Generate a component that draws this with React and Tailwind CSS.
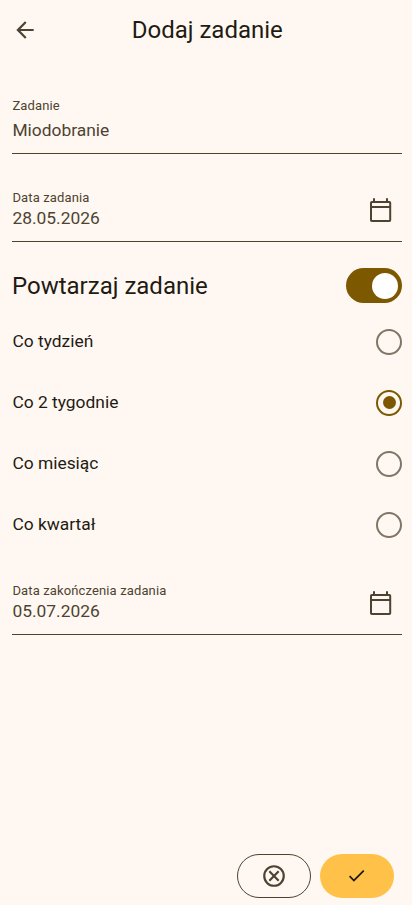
import React, { useState } from 'react';

const ArrowBackIcon = (props) => (
  <svg viewBox="0 0 24 24" fill="currentColor" {...props}>
    <path d="M20 11H7.83l5.59-5.59L12 4l-8 8 8 8 1.41-1.41L7.83 13H20v-2z" />
  </svg>
);

const CalendarIcon = (props) => (
  <svg viewBox="0 0 24 26" fill="none" stroke="currentColor" strokeWidth="2" {...props}>
    <rect x="2" y="5" width="19.2" height="19" rx="0.8" />
    <path d="M2 10H21.2M5 1.2V5M18 1.2V5" />
  </svg>
);

const CancelIcon = (props) => (
  <svg viewBox="0 0 24 24" fill="none" stroke="currentColor" strokeWidth="2" {...props}>
    <circle cx="12" cy="12" r="9" />
    <path d="M7.7 7.7l8.6 8.6M16.3 7.7l-8.6 8.6" />
  </svg>
);

const CheckIcon = (props) => (
  <svg viewBox="0 0 24 24" fill="currentColor" {...props}>
    <path d="M9 16.17L4.83 12l-1.42 1.41L9 19 21 7l-1.41-1.41z" />
  </svg>
);

const repeatOptions = ['Co tydzień', 'Co 2 tygodnie', 'Co miesiąc', 'Co kwartał'];

const DateField = ({ label, value }) => (
  <div className="flex h-[54px] items-start justify-between border-b border-[#4d4330] pr-[9.4px] text-[#4d4330]">
    <div className="pl-[0.4px]">
      <div className="pt-px text-[13px] leading-[18px] tracking-[0.13px]">{label}</div>
      <div className="text-[17.4px] leading-[23px]">{value}</div>
    </div>
    <button type="button" className="mt-[9px]">
      <CalendarIcon className="h-[26px] w-6" />
    </button>
  </div>
);

const App = () => {
  const [repeat, setRepeat] = useState(true);
  const [selected, setSelected] = useState('Co 2 tygodnie');

  return (
    <div className="flex h-[905px] w-full flex-col overflow-hidden bg-[#fff8f2] font-['Roboto',sans-serif] text-[#1f1b13]">
      {/* Top bar */}
      <header className="grid h-[60px] shrink-0 grid-cols-[48px_1fr_48px] items-center">
        <button type="button" className="pl-3 text-[#4d4330]">
          <ArrowBackIcon className="h-[26px] w-[26px]" />
        </button>
        <h1 className="pl-[2.5px] text-center text-2xl leading-[30px]">Dodaj zadanie</h1>
      </header>

      <main className="flex flex-1 flex-col pr-2.5 pl-3">
        <div className="mt-9 h-[58px] border-b border-[#4d4330] pl-[0.4px] text-[#4d4330]">
          <div className="pt-px text-[13px] leading-[18px] tracking-[0.13px]">Zadanie</div>
          <div className="mt-[3px] text-[17.4px] leading-6">Miodobranie</div>
        </div>

        <div className="mt-[34px]">
          <DateField label="Data zadania" value="28.05.2026" />
        </div>

        {/* Repeat switch */}
        <div className="mt-[26px] flex h-[35px] items-center justify-between">
          <h2 className="text-2xl leading-[30px]">Powtarzaj zadanie</h2>
          <button
            type="button"
            role="switch"
            aria-checked={repeat}
            onClick={() => setRepeat(!repeat)}
            className={`flex h-[35px] w-[56.5px] items-center rounded-full px-1 ${repeat ? 'justify-end bg-[#7c5800]' : 'justify-start bg-[#817567]'}`}
          >
            <span className="h-[26px] w-[26px] rounded-full bg-white" />
          </button>
        </div>

        <div className="mt-2">
          {repeatOptions.map((option) => (
            <button
              key={option}
              type="button"
              onClick={() => setSelected(option)}
              className="flex h-[61px] w-full items-center justify-between pl-[0.4px]"
            >
              <span className="pb-0.5 text-[17.4px] leading-6">{option}</span>
              <span
                className={`flex h-[26px] w-[26px] items-center justify-center rounded-full border-2 ${selected === option ? 'border-[#7c5800]' : 'border-[#817567]'}`}
              >
                {selected === option && <span className="h-[13px] w-[13px] rounded-full bg-[#7c5800]" />}
              </span>
            </button>
          ))}
        </div>

        <div className="mt-[26px]">
          <DateField label="Data zakończenia zadania" value="05.07.2026" />
        </div>
      </main>

      {/* Actions */}
      <footer className="flex justify-end gap-[8.5px] pr-[18.5px] pb-[7px]">
        <button
          type="button"
          className="flex h-11 w-[74px] items-center justify-center rounded-full border border-[#4d4330] text-[#4d4330]"
        >
          <CancelIcon className="h-[26px] w-[26px]" />
        </button>
        <button type="button" className="flex h-11 w-[74px] items-center justify-center rounded-full bg-[#ffc147] pb-px">
          <CheckIcon className="h-[21px] w-[21px]" />
        </button>
      </footer>
    </div>
  );
};

export default App;
